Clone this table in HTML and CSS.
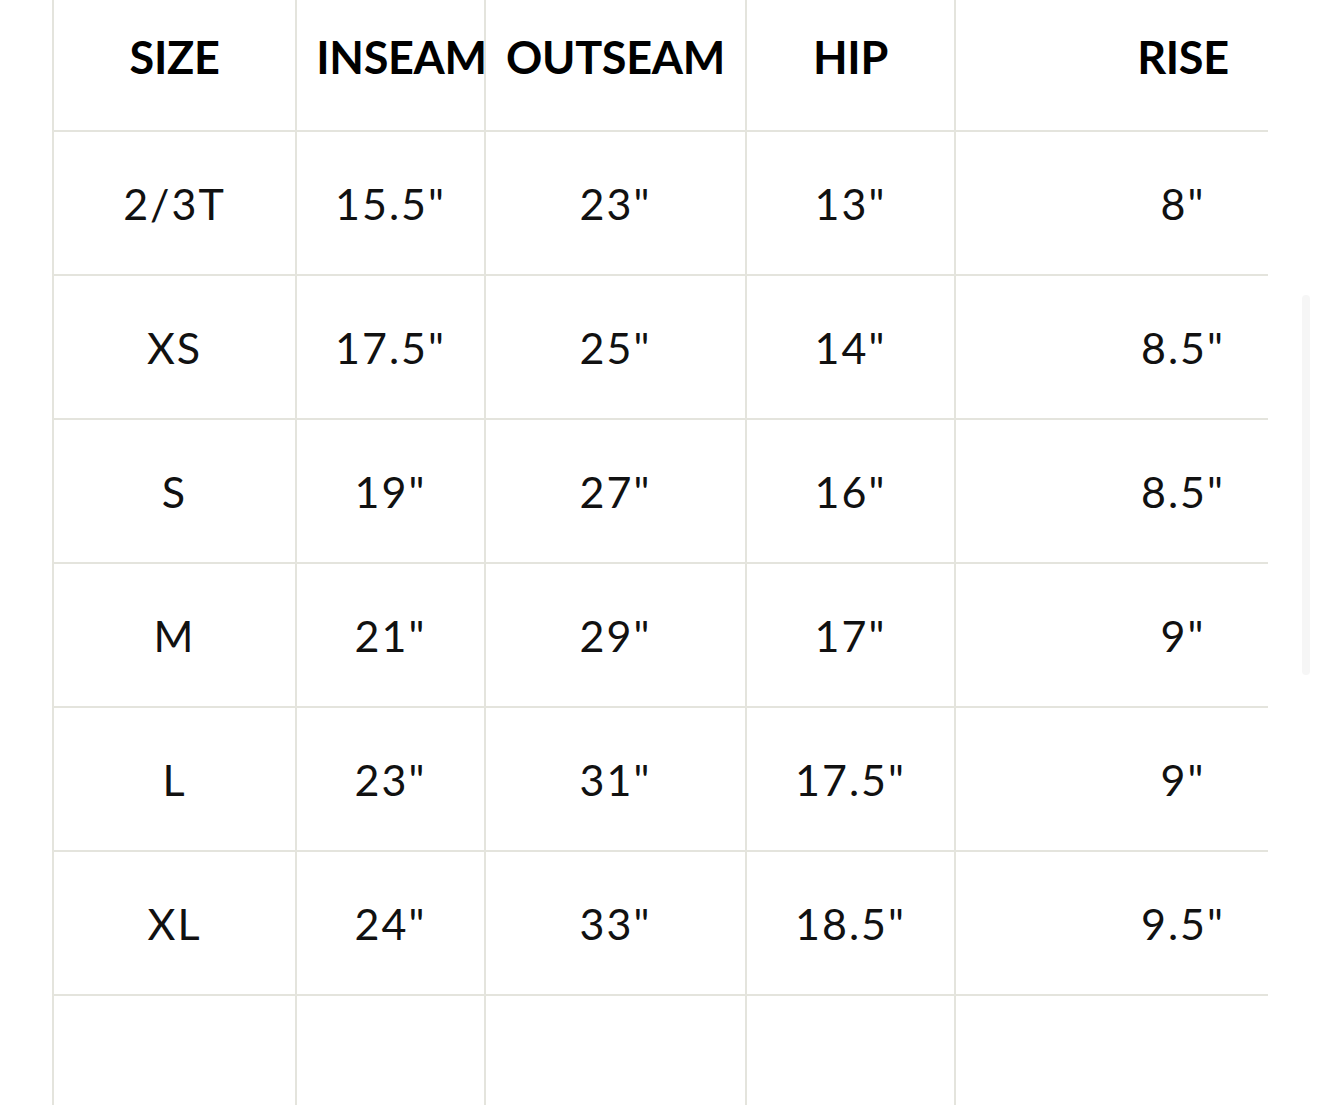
FILE: index.html
```html
<!DOCTYPE html>
<html>
<head>
<meta charset="utf-8">
<link rel="stylesheet" href="styles.css">
</head>
<body>
<div class="frame">
  <div class="chart">
    <div class="cell head">SIZE</div>
    <div class="cell head inseam">INSEAM</div>
    <div class="cell head">OUTSEAM</div>
    <div class="cell head">HIP</div>
    <div class="cell head">RISE</div>

    <div class="cell">2/3T</div>
    <div class="cell">15.5"</div>
    <div class="cell">23"</div>
    <div class="cell">13"</div>
    <div class="cell">8"</div>

    <div class="cell">XS</div>
    <div class="cell">17.5"</div>
    <div class="cell">25"</div>
    <div class="cell">14"</div>
    <div class="cell">8.5"</div>

    <div class="cell">S</div>
    <div class="cell">19"</div>
    <div class="cell">27"</div>
    <div class="cell">16"</div>
    <div class="cell">8.5"</div>

    <div class="cell">M</div>
    <div class="cell">21"</div>
    <div class="cell">29"</div>
    <div class="cell">17"</div>
    <div class="cell">9"</div>

    <div class="cell">L</div>
    <div class="cell">23"</div>
    <div class="cell">31"</div>
    <div class="cell">17.5"</div>
    <div class="cell">9"</div>

    <div class="cell">XL</div>
    <div class="cell">24"</div>
    <div class="cell">33"</div>
    <div class="cell">18.5"</div>
    <div class="cell">9.5"</div>

    <div class="cell"></div>
    <div class="cell"></div>
    <div class="cell"></div>
    <div class="cell"></div>
    <div class="cell"></div>
  </div>
</div>
<div class="scrollbar"></div>
</body>
</html>
```

FILE: styles.css
```css
html, body {
  margin: 0;
  padding: 0;
  background: #ffffff;
  height: 1105px;
  overflow: hidden;
}

.frame {
  margin-left: 52px;
  margin-top: -12px;
  width: 1216px;
  overflow: hidden;
}

.chart {
  display: grid;
  grid-template-columns: 243px 189px 261px 209px 456px;
  grid-auto-rows: 144px;
  width: 1358px;
  font-family: Lato, "Liberation Sans", sans-serif;
  color: #111111;
}

.cell {
  box-sizing: border-box;
  border-left: 2px solid #e4e4dd;
  border-bottom: 2px solid #e4e4dd;
  display: flex;
  align-items: center;
  justify-content: center;
  font-size: 43px;
  letter-spacing: 2px;
  white-space: nowrap;
}

.head {
  font-size: 45px;
  font-weight: 700;
  letter-spacing: -0.3px;
  color: #000000;
  padding-bottom: 4px;
}

.inseam {
  padding-left: 22px;
}

.scrollbar {
  position: fixed;
  left: 1302px;
  top: 295px;
  width: 8px;
  height: 380px;
  border-radius: 4px;
  background: #f6f6f6;
}
```
